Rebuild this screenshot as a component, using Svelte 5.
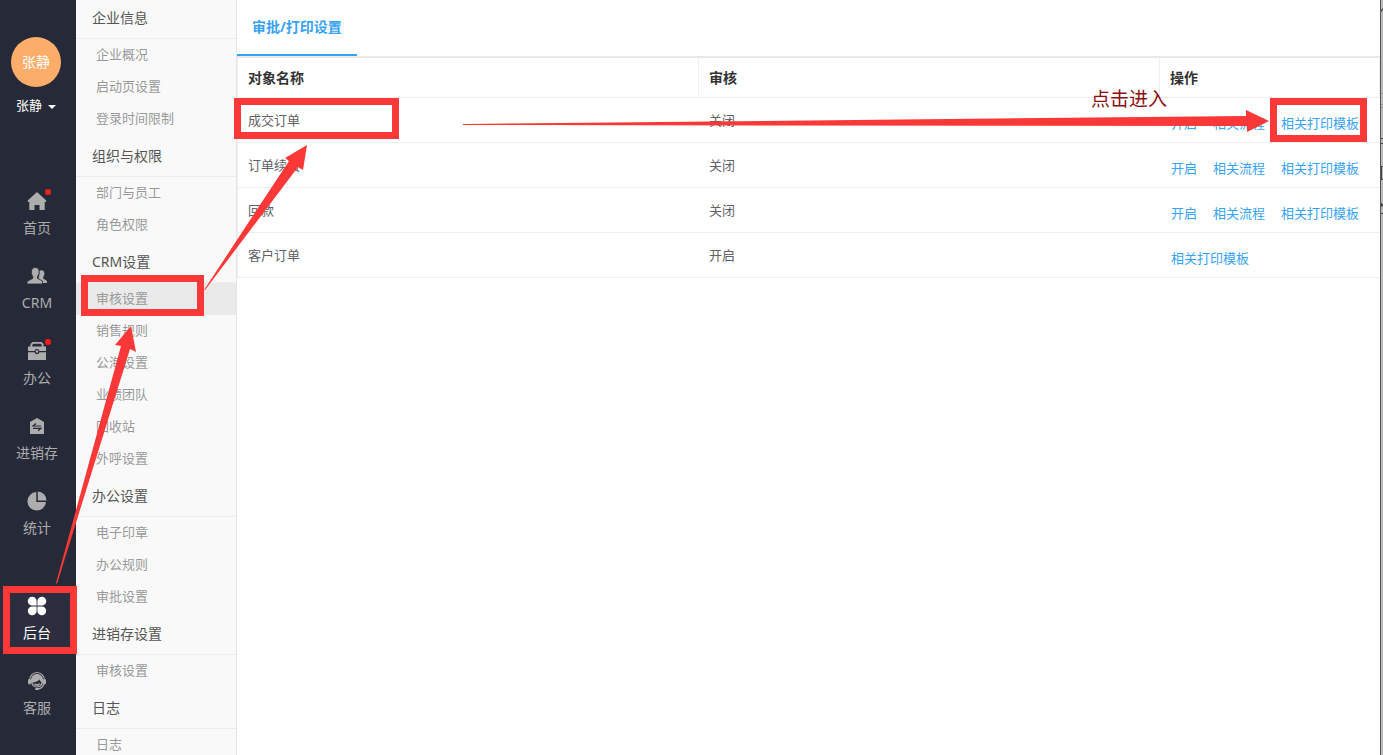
<script>
    let activeNav = '后台';
    let activeItem = 'crm-审核设置';

    const navMain = [
        { label: '首页', icon: 'home', dot: true },
        { label: 'CRM', icon: 'users' },
        { label: '办公', icon: 'case', dot: true },
        { label: '进销存', icon: 'stock' },
        { label: '统计', icon: 'pie' }
    ];
    const navBottom = [
        { label: '后台', icon: 'admin' },
        { label: '客服', icon: 'service' }
    ];

    const groups = [
        { id: 'company', title: '企业信息', items: ['企业概况', '启动页设置', '登录时间限制'] },
        { id: 'org', title: '组织与权限', items: ['部门与员工', '角色权限'] },
        { id: 'crm', title: 'CRM设置', items: ['审核设置', '销售规则', '公海设置', '业绩团队', '回收站', '外呼设置'] },
        { id: 'office', title: '办公设置', items: ['电子印章', '办公规则', '审批设置'] },
        { id: 'stock', title: '进销存设置', items: ['审核设置'] },
        { id: 'log', title: '日志', items: ['日志'] }
    ];

    const rows = [
        { name: '成交订单', state: '关闭', actions: ['开启', '相关流程', '相关打印模板'] },
        { name: '订单续费', state: '关闭', actions: ['开启', '相关流程', '相关打印模板'] },
        { name: '回款', state: '关闭', actions: ['开启', '相关流程', '相关打印模板'] },
        { name: '客户订单', state: '开启', actions: ['相关打印模板'] }
    ];
</script>

{#snippet navButton(item)}
    <button class="nav-item" class:active={activeNav === item.label} on:click={() => (activeNav = item.label)}>
        <span class="nav-icon">
            <svg width="20" height="20" viewBox="0 0 20 20" fill="currentColor" aria-hidden="true">
                {#if item.icon === 'home'}
                    <path d="M10 1 19.300 9.500 19 11h-1.300v8h-5.200v-5h-5v5H2.300v-8H1L.700 9.500Z" />
                {:else if item.icon === 'users'}
                    <path d="M14.500 4.300c2 0 3 1.400 2.900 3.400-.1 1.700-.7 2.500-1.200 3.200v1.600l3.800 2.600V17h-5l-3.500-5c.9-2 1.200-4.500.6-6.900.6-.5 1.400-.8 2.400-.8Z" />
                    <path stroke="#262a38" stroke-width=".8" d="M8.300 1.500c2.600 0 4 1.700 3.900 4.500-.1 2-.9 3.400-1.700 4.400v1.900l5 2.700v3H0v-2.500l5.800-3.200v-1.900C5 9.400 4.400 8 4.400 6c-.1-2.800 1.300-4.500 3.900-4.500Z" />
                {:else if item.icon === 'case'}
                    <path fill-rule="evenodd" d="M3.500 5.500V3L5.500 1h9l2 2v2.500H19V10h-6.500a2.600 2.600 0 0 0-5 0H1V5.500Zm1.800 0h9.400V3.700l-1-1H6.300l-1 1Z" />
                    <path d="M1 11.200h6.600c.3 1.300 1.200 2 2.400 2s2.100-.7 2.400-2H19V19H1Z" />
                    <circle cx="10" cy="10.500" r="1.300" />
                {:else if item.icon === 'stock'}
                    <path d="m10 2 7 4v12H3V6Z" />
                    <path fill="none" stroke="#262a38" stroke-width="1.200" d="M14 10H6l3-2.500M6 12.300h8l-3 2.500" />
                {:else if item.icon === 'pie'}
                    <path d="M9.300 1v10H19A9.300 9.300 0 1 1 9.300 1Z" />
                    <path d="M10.800.5A9 9 0 0 1 19.500 9.500h-8.700Z" />
                {:else if item.icon === 'admin'}
                    <path d="M5.200.7a4.400 4.400 0 0 1 4.400 4.400v4.500H5.200a4.400 4.400 0 0 1 0-8.900ZM14.800.7a4.400 4.400 0 0 1 0 8.900h-4.400V5.100A4.400 4.400 0 0 1 14.800.7ZM5.200 10.400h4.400v4.500a4.400 4.400 0 1 1-4.400-4.500ZM10.400 10.400h4.400a4.400 4.400 0 1 1-4.400 4.500Z" />
                {:else}
                    <path fill="none" stroke="currentColor" stroke-width="1.200" d="M2.500 9.500a7.500 8 0 0 1 15 0M17 12.500c-.8 3.300-3 5-6 5.300" />
                    <path d="M3.900 9C4.200 5 6.800 2.900 10 2.900s5.800 2.100 6.100 6.100c.3 4.500-2.100 7.500-6.100 7.500S3.600 13.500 3.900 9Z" />
                    <path fill="#262a38" d="M5.500 11.500c3.300-.2 5.500-1.300 7-3 .3 1.300 1 2 2 2.500-.3 2.700-2 4.400-4.500 4.400s-4.200-1.500-4.500-3.900Z" />
                    <path d="M6.800 12.500c2 .7 4.400.7 6.400-.5-.4 2-1.600 2.800-3.200 2.800s-2.700-.7-3.200-2.300Z" />
                    <rect x="1" y="8" width="3" height="5.500" rx="1.400" />
                    <rect x="16" y="8" width="3" height="5.500" rx="1.400" />
                    <rect x="8" y="17" width="4" height="2" rx="1" />
                {/if}
            </svg>
            {#if item.dot}<i class="dot"></i>{/if}
        </span>
        <span>{item.label}</span>
    </button>
{/snippet}

<div class="app">
    <nav class="nav">
        <div class="avatar">张静</div>
        <button class="user">张静<i class="caret"></i></button>
        <div class="nav-list">
            {#each navMain as item}
                {@render navButton(item)}
            {/each}
        </div>
        <div class="nav-list bottom">
            {#each navBottom as item}
                {@render navButton(item)}
            {/each}
        </div>
    </nav>

    <aside class="menu">
        <div class="menu-scroll">
            {#each groups as group}
                <h3>{group.title}</h3>
                {#each group.items as item}
                    <a href="#{group.id}" class:active={activeItem === `${group.id}-${item}`}
                        on:click|preventDefault={() => (activeItem = `${group.id}-${item}`)}>{item}</a>
                {/each}
            {/each}
        </div>
    </aside>

    <main>
        <div class="tabs">
            <button class="tab">审批/打印设置</button>
        </div>
        <table>
            <colgroup>
                <col class="wide" />
                <col class="wide" />
                <col />
            </colgroup>
            <thead>
                <tr><th>对象名称</th><th>审核</th><th>操作</th></tr>
            </thead>
            <tbody>
                {#each rows as row}
                    <tr>
                        <td>{row.name}</td>
                        <td>{row.state}</td>
                        <td>
                            <div class="actions">
                                {#each row.actions as action}
                                    <a href="#action">{action}</a>
                                {/each}
                            </div>
                        </td>
                    </tr>
                {/each}
            </tbody>
        </table>
    </main>

    <div class="edge"></div>

    <!-- guide marks drawn over the page -->
    <svg class="marks" width="1383" height="755" viewBox="0 0 1383 755">
        <g fill="none" stroke="#fb3838" stroke-width="7">
            <rect x="6.500" y="589.500" width="67" height="61" />
            <rect x="84.500" y="278.500" width="116" height="34" />
            <rect x="237.500" y="101.500" width="158" height="34" />
            <rect x="1273.500" y="101.500" width="90" height="37" />
        </g>
        <g fill="#fb3838">
            <path d="M56 583 121 346 115 345 131 326 136 352 130 349 57 584Z" />
            <path d="M204 290 289 161 285 158 307 145 303 170 298 167 205 290Z" />
            <path d="M463 124 1246 116V110L1269 121 1247 132V126L463 125Z" />
        </g>
        <g fill="#444">
            <path d="M1381 10l2-2v2l-2 2Z" />
            <path fill="#999" d="M1381 93h2v1h-2ZM1381 104h2v1h-2ZM1381 107h2v1h-2Z" />
            <path d="M1381 138h2v1h-2ZM1381 143h2v1h-2ZM1381 166h2v1h-1v12h1v1h-2ZM1381 203l2 1v2l-2 1ZM1381 213h2v1h-2Z" />
        </g>
        <text x="1091" y="106">点击进入</text>
    </svg>
</div>

<style>
    :global(body) {
        margin: 0;
        font-family: 'Noto Sans', 'Noto Sans CJK SC', sans-serif;
    }

    button {
        padding: 0;
        border: 0;
        background: none;
        font-family: inherit;
        cursor: pointer;
    }
    a {
        text-decoration: none;
    }

    .app {
        position: relative;
        display: flex;
        height: 100vh;
        overflow: hidden;
        background: #fff;
    }

    .nav {
        flex: 0 0 76px;
        display: flex;
        flex-direction: column;
        align-items: center;
        box-sizing: border-box;
        padding: 37px 2px 31px 0;
        background: #262a38;
    }
    .avatar {
        width: 50px;
        height: 50px;
        margin-right: 2px;
        border-radius: 50%;
        background: #fdad6a;
        color: #fff;
        font-size: 14px;
        line-height: 50px;
        text-align: center;
    }
    .user {
        display: flex;
        align-items: center;
        gap: 6px;
        margin: 8px 2px 0 0;
        color: #fff;
        font-size: 13px;
        line-height: 20px;
    }
    .caret {
        margin-top: 3px;
        border: 4px solid transparent;
        border-top-color: #fff;
        border-bottom: 0;
    }

    .nav-list {
        align-self: stretch;
        display: flex;
        flex-direction: column;
        gap: 15px;
        margin: 69px -2px 0 0;
    }
    .nav-list.bottom {
        margin-top: auto;
    }
    .nav-item {
        display: flex;
        flex-direction: column;
        align-items: center;
        gap: 7px;
        height: 60px;
        box-sizing: border-box;
        padding: 7px 2px 0 0;
        color: #adadad;
        font-size: 14px;
        line-height: 20px;
    }
    .nav-item.active {
        background: #2c2d3f;
        color: #fff;
    }
    .nav-icon {
        position: relative;
        height: 20px;
    }
    .nav-icon svg {
        display: block;
    }
    .dot {
        position: absolute;
        top: -2px;
        right: -4px;
        width: 6px;
        height: 6px;
        border-radius: 50%;
        background: #ff1a1a;
    }

    .menu {
        flex: 0 0 160px;
        overflow: hidden;
        border-right: 1px solid #e6e6e6;
        background: #f9f9f9;
    }
    .menu-scroll {
        margin-top: -3px;
    }
    .menu h3 {
        margin: 0;
        padding-left: 16px;
        border-bottom: 1px solid #ededed;
        color: #555;
        font-size: 14px;
        font-weight: 400;
        line-height: 41px;
    }
    .menu a {
        display: block;
        padding: 0 0 2px 20px;
        color: #999;
        font-size: 13px;
        line-height: 30px;
    }
    .menu a.active {
        background: #eaeaea;
    }

    main {
        flex: 1;
        min-width: 0;
    }
    .tabs {
        height: 56px;
        border-bottom: 2px solid #e6e8ec;
    }
    .tab {
        height: 56px;
        box-sizing: border-box;
        padding: 0 15px 2px;
        border-bottom: 2px solid #36a3f7;
        color: #36a3f7;
        font-size: 14px;
        font-weight: 700;
    }

    table {
        width: 100%;
        border-left: 1px solid #ebeef5;
        border-collapse: separate;
        border-spacing: 0;
        table-layout: fixed;
    }
    .wide {
        width: 461px;
    }
    th,
    td {
        box-sizing: border-box;
        padding: 0 10px 2px;
        border-bottom: 1px solid #ebeef5;
        text-align: left;
    }
    th {
        height: 40px;
        border-right: 1px solid #ebeef5;
        color: #333;
        font-size: 14px;
        font-weight: 700;
    }
    td {
        height: 45px;
        color: #606266;
        font-size: 13px;
    }
    .actions {
        display: flex;
        gap: 16px;
        padding: 6px 0 0 1px;
        white-space: nowrap;
    }
    .actions a {
        color: #36a3f7;
    }

    .edge {
        flex: 0 0 2px;
        border-left: 1px solid #555;
        background: #bbb;
    }

    .marks {
        position: absolute;
        top: 0;
        left: 0;
        pointer-events: none;
    }
    .marks text {
        fill: #8b0f0f;
        font-size: 19px;
    }
</style>
